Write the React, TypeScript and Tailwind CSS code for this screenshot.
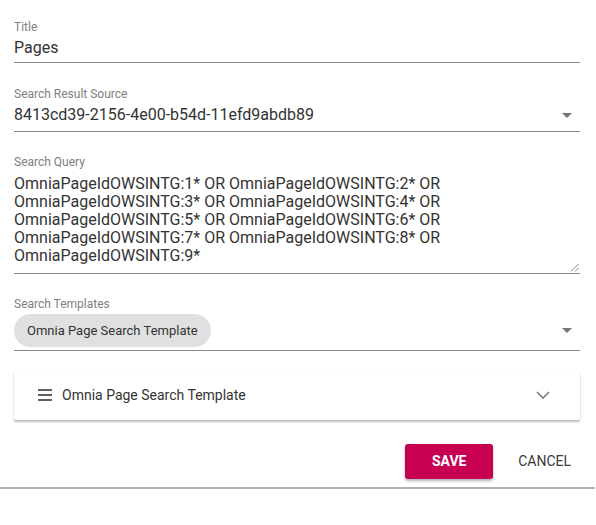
import React from "react";

const Arrow = () => (
  <svg width="10" height="5" viewBox="0 0 10 5" className="shrink-0">
    <path d="M0 0 L10 0 L5 5 Z" fill="#757575" />
  </svg>
);

export default function App() {
  return (
    <div className="w-[596px] h-[525px] bg-white" style={{ fontFamily: "Roboto, 'Noto Sans', sans-serif" }}>
      <div className="pl-[14px] pr-[16px] pt-[19px] flex flex-col">
        {/* Title */}
        <div className="flex flex-col border-b border-[#8a8a8a] pb-[2px]">
          <div className="text-[12px] leading-4 text-[#808080]">Title</div>
          <div className="text-[16px] leading-6 text-[#333333] mt-[1px]">Pages</div>
        </div>
        {/* Search result source */}
        <div className="flex flex-col border-b border-[#8a8a8a] pb-[4px] mt-[23px]">
          <div className="text-[12px] leading-4 text-[#808080]">Search Result Source</div>
          <div className="flex items-center justify-between mt-[1px] pr-[8px]">
            <div className="text-[16px] leading-6 text-[#333333]">8413cd39-2156-4e00-b54d-11efd9abdb89</div>
            <Arrow />
          </div>
        </div>
        {/* Search query */}
        <div className="flex flex-col border-b border-[#8a8a8a] mt-[22px] relative">
          <div className="text-[12px] leading-4 text-[#808080]">Search Query</div>
          <div className="text-[16px] leading-[18px] text-[#333333] mt-[5px] pb-[8px] pr-[20px]">
            OmniaPageIdOWSINTG:1* OR OmniaPageIdOWSINTG:2* OR OmniaPageIdOWSINTG:3* OR OmniaPageIdOWSINTG:4* OR OmniaPageIdOWSINTG:5* OR OmniaPageIdOWSINTG:6* OR OmniaPageIdOWSINTG:7* OR OmniaPageIdOWSINTG:8* OR OmniaPageIdOWSINTG:9*
          </div>
          <svg width="9" height="9" viewBox="0 0 9 9" className="absolute right-[1px] bottom-[1px]">
            <path d="M8.5 1 L1 8.5 M8.5 5 L5 8.5" stroke="#888" strokeWidth="1" />
          </svg>
        </div>
        {/* Search templates */}
        <div className="flex flex-col border-b border-[#8a8a8a] pb-[3px] mt-[22px]">
          <div className="text-[12px] leading-4 text-[#808080]">Search Templates</div>
          <div className="flex items-center justify-between mt-[2px] pr-[8px]">
            <div className="h-[33px] rounded-full bg-[#e0e0e0] px-[13px] flex items-center text-[13px] text-[#333333]">
              Omnia Page Search Template
            </div>
            <Arrow />
          </div>
        </div>
        {/* Expansion panel */}
        <div className="mt-[19px] h-[50px] bg-white flex items-center pl-[24px] pr-[30px] shadow-[0_2px_2px_rgba(0,0,0,0.25),0_0_1px_rgba(0,0,0,0.15)] rounded-[2px]">
          <svg width="14" height="12" viewBox="0 0 14 12" className="shrink-0">
            <rect x="0" y="0" width="14" height="2" fill="#616161" />
            <rect x="0" y="5" width="14" height="2" fill="#616161" />
            <rect x="0" y="10" width="14" height="2" fill="#616161" />
          </svg>
          <div className="ml-[10px] text-[14px] text-[#333333] flex-1">Omnia Page Search Template</div>
          <svg width="14" height="8" viewBox="0 0 14 8" className="shrink-0">
            <path d="M1 1 L7 7 L13 1" stroke="#757575" strokeWidth="1.5" fill="none" />
          </svg>
        </div>
        {/* Buttons */}
        <div className="flex justify-end items-center mt-[24px] pr-[9px]">
          <button className="w-[88px] h-[35px] rounded-[3px] bg-[#c70052] text-white text-[14px] font-bold shadow-[0_2px_3px_rgba(0,0,0,0.3)]">
            SAVE
          </button>
          <button className="ml-[25px] text-[14px] text-[#3a3a3a] font-normal">CANCEL</button>
        </div>
      </div>
      <div className="w-[595px] h-[2px] bg-[#b0b0b0] mt-[8px]" />
    </div>
  );
}
